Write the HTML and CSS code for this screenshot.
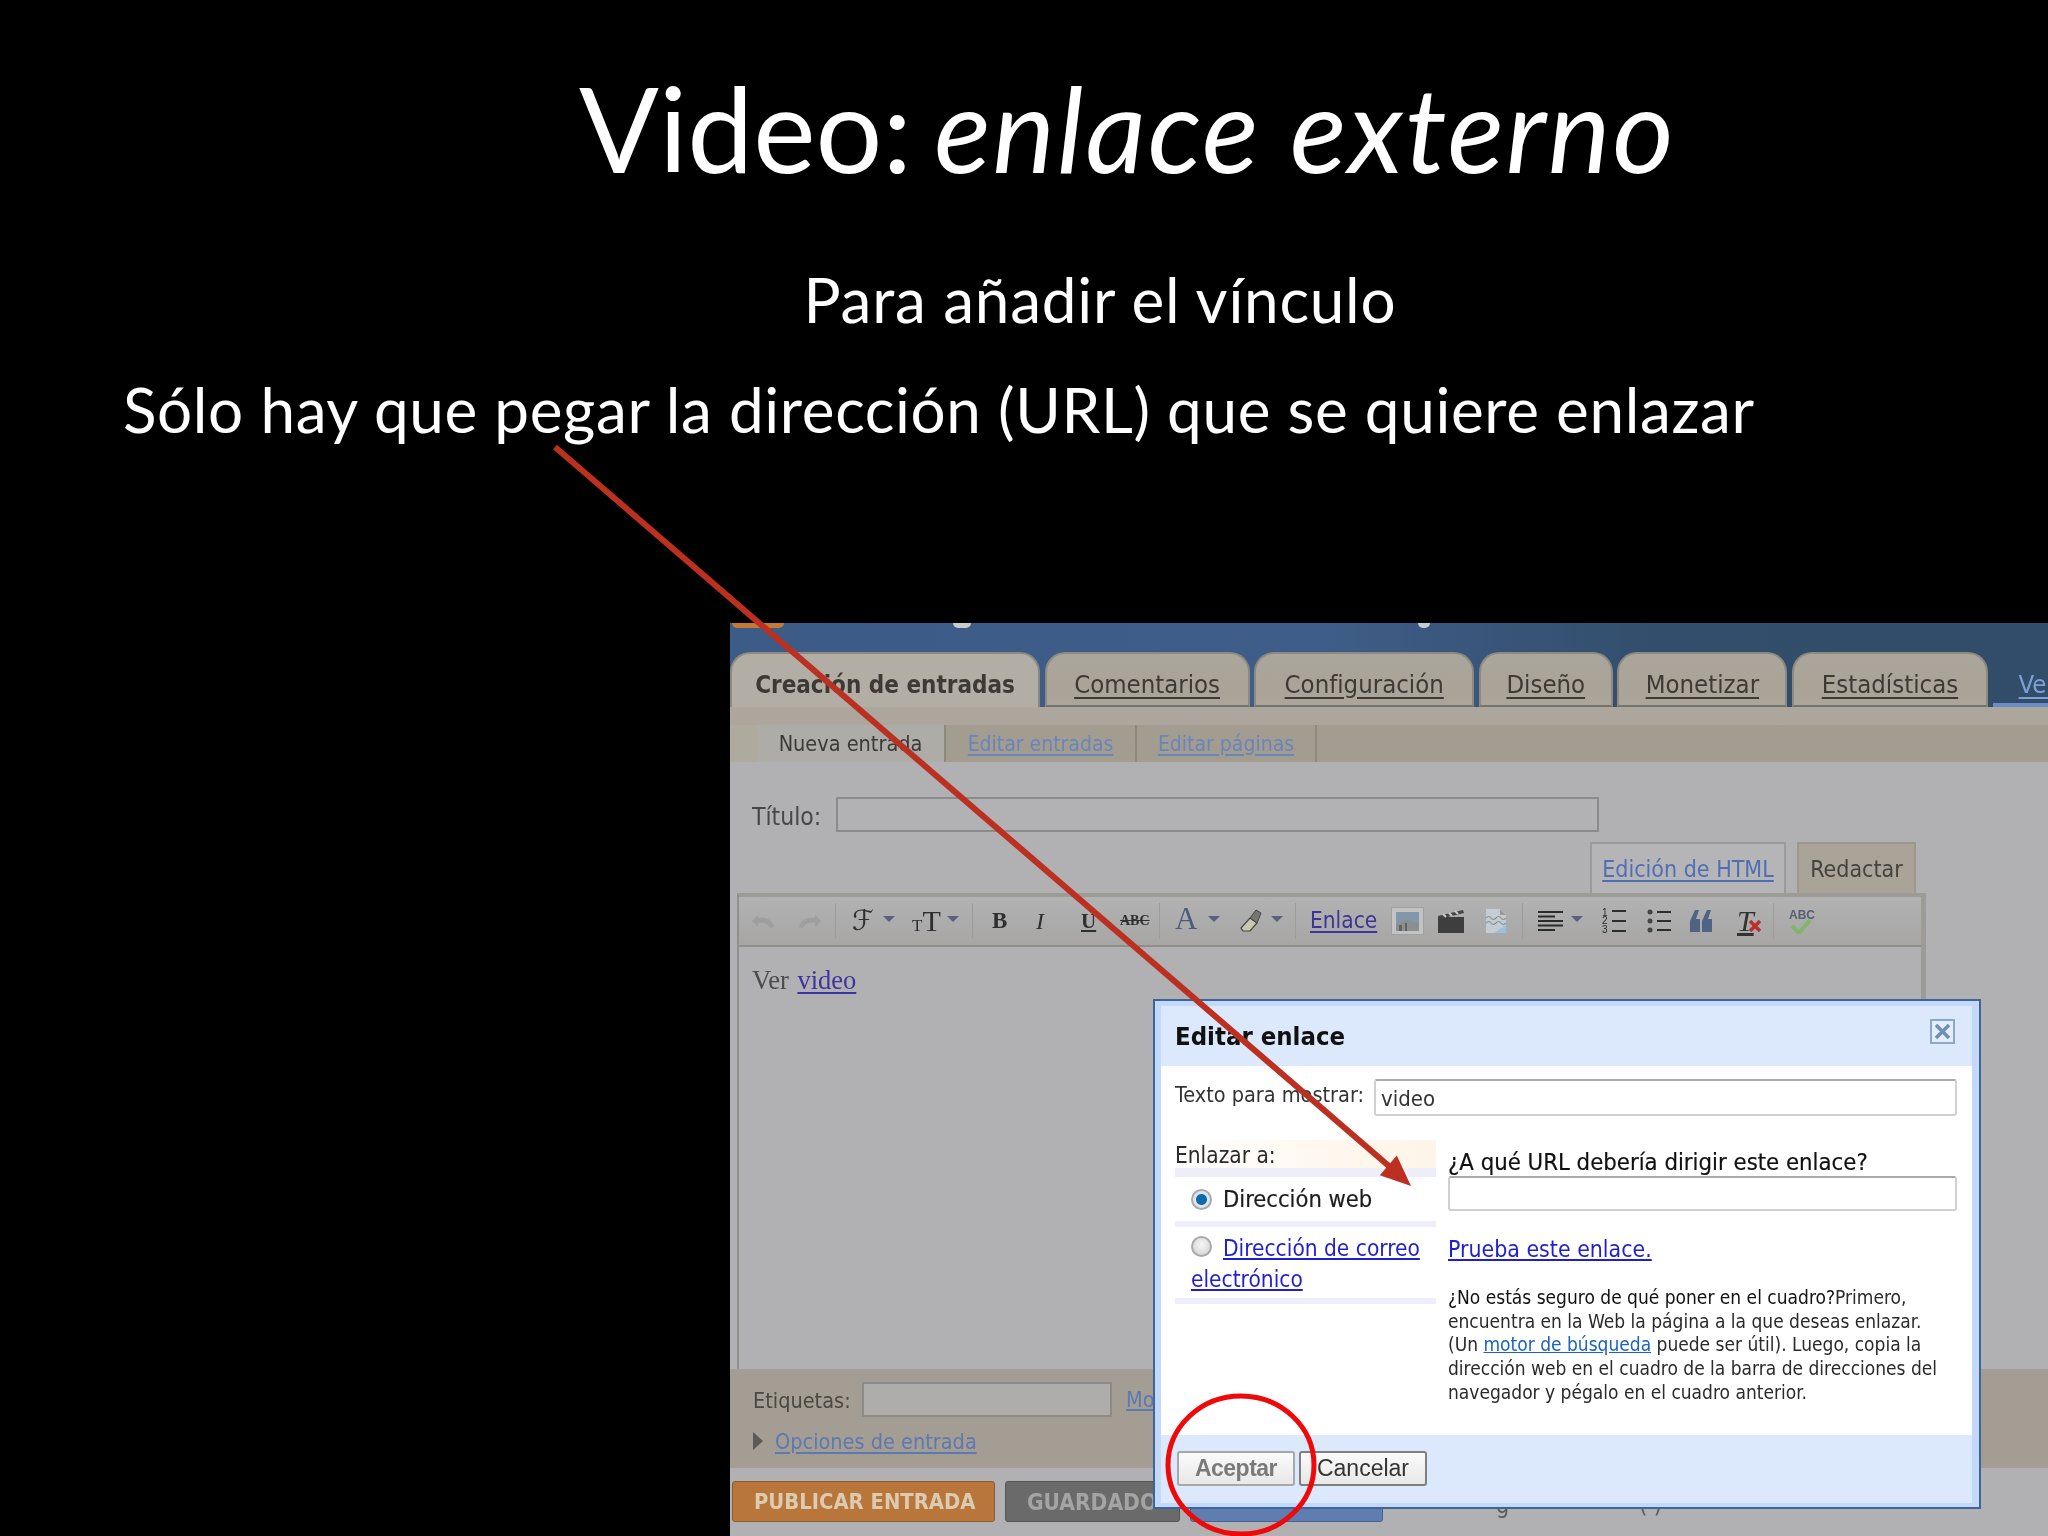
FILE: index.html
```html
<!DOCTYPE html>
<html lang="es">
<head>
<meta charset="utf-8">
<title>Video: enlace externo</title>
<link rel="stylesheet" href="styles.css">
</head>
<body>
<main class="slide">
  <h1 class="slide-title">Video: <em>enlace externo</em></h1>
  <p class="slide-sub">Para añadir el vínculo</p>
  <p class="slide-line">Sólo hay que pegar la dirección (URL) que se quiere enlazar</p>

  <section class="shot">
    <div class="topbar">
      <div class="strip"><i class="bit bit-orange"></i><i class="bit bit-white"></i><i class="bit bit-white2"></i></div>
      <nav class="tabs">
        <span class="tab tab-active">Creación de entradas</span>
        <a class="tab">Comentarios</a>
        <a class="tab">Configuración</a>
        <a class="tab">Diseño</a>
        <a class="tab">Monetizar</a>
        <a class="tab">Estadísticas</a>
        <a class="tab-view">Ver blog</a>
      </nav>
    </div>
    <div class="band"></div>
    <nav class="subnav">
      <i></i>
      <span class="sub sub-active">Nueva entrada</span>
      <a class="sub">Editar entradas</a>
      <a class="sub">Editar páginas</a>
    </nav>

    <div class="content">
      <div class="title-row">
        <label class="title-label">Título:</label>
        <div class="field title-field"></div>
      </div>
      <div class="mode-row">
        <a class="mode mode-html">Edición de HTML</a>
        <span class="mode mode-compose">Redactar</span>
      </div>
      <div class="editor">
        <div class="toolbar">
          <svg class="ic" width="23" height="14" viewBox="0 0 23 14"><path d="M6 13V1L0 7zM6 4c8-1 14 1 16 9l-4 1C16 9 12 8 6 9z" fill="#9f9e9e"/></svg>
          <svg class="ic" width="23" height="14" viewBox="0 0 23 14"><path d="M17 13V1l6 6zM17 4C9 3 3 5 1 13l4 1c2-5 6-6 12-5z" fill="#9f9e9e"/></svg>
          <i class="sep"></i>
          <span class="t-font">ℱ</span>
          <i class="caret"></i>
          <span class="t-size"><small>T</small>T</span>
          <i class="caret"></i>
          <i class="sep"></i>
          <b class="t-b">B</b>
          <i class="t-i">I</i>
          <span class="t-u">U</span>
          <span class="t-abc">ABC</span>
          <i class="sep"></i>
          <span class="t-a">A</span>
          <i class="caret"></i>
          <svg class="ic" width="22" height="24" viewBox="0 0 22 24"><path d="M1 19l9-10 7 5-7 8H3z" fill="#c9c8ac" stroke="#444" stroke-width="1.2"/><path d="M10 9l6-8 5 3-4 10z" fill="#77776f" stroke="#444"/></svg>
          <i class="caret"></i>
          <i class="sep"></i>
          <a class="t-link">Enlace</a>
          <span class="img-btn"><svg width="23" height="19" viewBox="0 0 23 19"><rect width="23" height="19" fill="#7f98ac"/><path d="M0 19v-7l5-2 5-3 6 3 7 1v8z" fill="#8b8f90"/><path d="M3 19v-6h3v6zM9 19v-8h2v8z" fill="#5e6466"/></svg></span>
          <svg class="ic" width="28" height="24" viewBox="0 0 28 24"><path d="M1 8h26v16H1z" fill="#3e3e3e"/><path d="M1 7l25-6 1 3L2 10z" fill="#444"/><path d="M6 5l3 3M12 4l3 3M18 2l3 3" stroke="#ccc" stroke-width="2"/></svg>
          <svg class="ic" width="22" height="26" viewBox="0 0 22 26"><path d="M1 1h14l6 6v18H1z" fill="#c3cdd3"/><path d="M15 1v6h6z" fill="#999"/><path d="M1 10q3-3 5 0t5 0 5 0 5 0M1 15q3-3 5 0t5 0 5 0 5 0" fill="none" stroke="#8e8e8c" stroke-width="1.2"/><path d="M9 25l12-8v8z" fill="#9cc0da"/></svg>
          <i class="sep"></i>
          <svg class="ic" width="25" height="20" viewBox="0 0 25 20"><path d="M0 1h25M0 5.500h17M0 10h25M0 14.500h25M0 19h17" stroke="#2b2b2b" stroke-width="2"/></svg>
          <i class="caret"></i>
          <svg class="ic" width="24" height="26" viewBox="0 0 24 26"><path d="M10 3h14M10 13h14M10 23h14" stroke="#2d2d2d" stroke-width="2"/><text class="ic-num" x="0" y="8">1</text><text class="ic-num" x="0" y="16">2</text><text class="ic-num" x="0" y="25">3</text></svg>
          <svg class="ic" width="24" height="24" viewBox="0 0 24 24"><path d="M10 3h14M10 12h14M10 21h14" stroke="#2d2d2d" stroke-width="2"/><circle cx="3" cy="3" r="2.500" fill="#444"/><circle cx="3" cy="12" r="2.500" fill="#444"/><circle cx="3" cy="21" r="2.500" fill="#444"/></svg>
          <svg class="ic" width="22" height="22" viewBox="0 0 22 22"><path d="M0 22V11L5 0h4L6 9h4v13zM12 22V11l5-11h4l-3 9h4v13z" fill="#4f6384"/></svg>
          <span class="t-clear">T<svg class="ic-x" width="12" height="12" viewBox="0 0 12 12"><path d="M1 1l10 10M11 1L1 11" stroke="#bb2f2f" stroke-width="3.500"/></svg></span>
          <i class="sep"></i>
          <span class="t-spell">ABC<svg class="ic-check" width="20" height="16" viewBox="0 0 20 16"><path d="M1 8l7 7L19 2" fill="none" stroke="#7fb56d" stroke-width="4"/></svg></span>
        </div>
        <div class="editor-body">Ver <a>video</a></div>
      </div>
      <div class="meta">
        <div class="labels-row">
          <span class="labels-label">Etiquetas:</span>
          <div class="field labels-field"></div>
          <a class="labels-more">Mostrar todo</a>
        </div>
        <div class="options-row"><i class="tri"></i><a>Opciones de entrada</a></div>
      </div>
      <div class="actions">
        <span class="btn btn-publish">PUBLICAR ENTRADA</span>
        <span class="btn btn-saved">GUARDADO</span>
        <span class="btn btn-preview"></span>
        <span class="under under-a">g</span>
        <span class="under under-b">( )</span>
      </div>
    </div>

    <div class="dialog">
      <header class="dlg-head">
        <strong>Editar enlace</strong>
        <span class="dlg-close"><svg width="17" height="17" viewBox="0 0 17 17"><path d="M2 2l13 13M15 2L2 15" stroke="#6f8fb5" stroke-width="3.500"/></svg></span>
      </header>
      <div class="dlg-body">
        <div class="dlg-row">
          <label>Texto para mostrar:</label>
          <div class="dlg-input dlg-input-text">video</div>
        </div>
        <div class="dlg-cols">
          <div class="dlg-left">
            <div class="dlg-to">Enlazar a:</div>
            <div class="opt opt-web"><span class="radio radio-on"></span><span>Dirección web</span></div>
            <div class="opt opt-mail"><a><span class="radio"></span><span class="opt-gap">Dirección de correo</span> electrónico</a></div>
          </div>
          <div class="dlg-right">
            <div class="dlg-q">¿A qué URL debería dirigir este enlace?</div>
            <div class="dlg-input dlg-input-url"></div>
            <a class="dlg-test">Prueba este enlace.</a>
            <p class="dlg-help"><b>¿No estás seguro de qué poner en el cuadro?</b>Primero, encuentra en la Web la página a la que deseas enlazar. (Un <a>motor de búsqueda</a> puede ser útil). Luego, copia la dirección web en el cuadro de la barra de direcciones del navegador y pégalo en el cuadro anterior.</p>
          </div>
        </div>
      </div>
      <footer class="dlg-foot">
        <span class="dlg-btn dlg-ok">Aceptar</span>
        <span class="dlg-btn dlg-cancel">Cancelar</span>
      </footer>
    </div>
  </section>

  <svg class="marks" width="2048" height="1536" viewBox="0 0 2048 1536">
    <path d="M555 447L1390 1167" stroke="#bb3020" stroke-width="6" fill="none"/>
    <polygon points="1411,1186 1379.800,1175.200 1396.800,1155.600" fill="#bb3020"/>
    <ellipse cx="1241" cy="1465" rx="73" ry="69" fill="none" stroke="#ee0a0a" stroke-width="5"/>
  </svg>
</main>
</body>
</html>
```
FILE: styles.css
```css
* { box-sizing: border-box; }
html, body { margin: 0; padding: 0; background: #000; }
a { color: inherit; text-decoration: underline; }
.slide {
  position: relative;
  width: 2048px;
  height: 1536px;
  overflow: hidden;
  background: #000;
  color: #fff;
  font-family: Lato, "Open Sans", sans-serif;
  display: flex;
  flex-direction: column;
}
.slide-title {
  margin: 0;
  height: 262px;
  padding-left: 579px;
  font-size: 118px;
  line-height: 256px;
  font-weight: 400;
  white-space: nowrap;
}
.slide-title em { font-style: italic; letter-spacing: 1.900px; margin-left: -8px; }
.slide-sub {
  margin: 0;
  height: 76px;
  text-align: center;
  padding-left: 152px;
  font-size: 62px;
  letter-spacing: 0.770px;
  line-height: 74px;
  white-space: nowrap;
}
.slide-line {
  margin: 34px 0 0;
  height: 76px;
  padding-left: 123px;
  font-size: 62px;
  letter-spacing: 0.630px;
  line-height: 74px;
  white-space: nowrap;
}

/* screenshot */
.shot {
  position: absolute;
  left: 730px;
  top: 623px;
  width: 1318px;
  height: 913px;
  overflow: hidden;
  color: #3b3a38;
  background: #b1b0b2;
  font-family: "DejaVu Sans", sans-serif;
  font-stretch: condensed;
  filter: blur(0.55px);
}
.topbar { height: 84px; background: linear-gradient(90deg, #3c5b86 0%, #3e5d88 45%, #334e6c 70%, #324d69 100%); }
.strip { height: 6px; position: relative; display: flex; }
.bit { display: block; height: 5px; border-radius: 0 0 5px 5px; }
.bit-orange { width: 52px; margin-left: 2px; background: #c47a35; }
.bit-white { width: 18px; margin-left: 169px; background: #c9cccf; }
.bit-white2 { width: 12px; margin-left: 447px; background: #c9cccf; }
.tabs {
  margin-top: 23px;
  height: 55px;
  display: grid;
  grid-template-columns: 310px 205px 220px 134px 170px 196px 1fr;
  column-gap: 4.6px;
  font-size: 25.500px;
}
.tab {
  display: flex;
  align-items: center;
  justify-content: center;
  background: linear-gradient(#aba69b, #a9a398 60%, #aba699);
  border: 2px solid #8e8a7f;
  border-bottom: 2px solid #74736e;
  border-radius: 20px 20px 0 0;
  color: #3d3a36;
  text-underline-offset: 4px;
  padding-top: 8px;
}
.tab-active {
  background: #b2aea6;
  font-weight: 700;
  font-size: 24px;
  border-bottom: 0;
  border-right-color: #8a877e;
  text-decoration: none;
}
.tab-view {
  align-self: stretch;
  border-bottom: 4px solid #6b8cc4;
  padding: 17px 0 0 26px;
  color: #7da0d6;
  white-space: nowrap;
  overflow: hidden;
  margin-right: -4.6px;
  text-underline-offset: 4px;
}
.band { height: 18px; background: #aca69c; }
.subnav {
  height: 37px;
  display: grid;
  grid-template-columns: 27px 189px 191px 180px;
  background: linear-gradient(#a29c91, #a39d90);
  font-size: 21px;
}
.subnav i { background: #aeaa9d; }
.sub {
  display: flex;
  align-items: center;
  justify-content: center;
  border-right: 2px solid #8c897e;
  color: #6a85bb;
  text-underline-offset: 3px;
}
.sub-active { background: #aeaca6; color: #3b3a38; font-size: 21.500px; }

.content { height: 775px; display: flow-root; background: #b1b0b2; }
.title-row { display: flex; margin: 35px 0 0 22px; height: 35px; align-items: center; font-size: 24.500px; color: #47474a; }
.title-label { width: 84px; padding-top: 3px; }
.field { border: 2px solid #8b8b8b; background: #b2b1b4; }
.title-field { width: 763px; height: 35px; }
.mode-row { display: flex; margin: 10px 0 0 860px; height: 51px; gap: 11px; font-size: 23px; }
.mode { display: flex; align-items: center; justify-content: center; border: 2px solid #9a9a98; border-bottom: 0; }
.mode-html { width: 196px; background: #b5b5b7; color: #506fb3; text-underline-offset: 3px; }
.mode-compose { width: 119px; background: #a9a398; color: #45433f; border-color: #9d988c; }

.editor {
  margin-left: 7px;
  width: 1189px;
  height: 476px;
  border-top: 4px solid #9c9b95;
  border-right: 5px solid #9c9b95;
  border-left: 2px solid #8f8f8d;
}
.toolbar {
  height: 50px;
  padding-left: 13px;
  display: grid;
  grid-template-columns: 46px 37px 17px 31px 29px 35px 25px 20px 44px 45px 39px 39px 16px 33px 32px 31px 24px 15px 81px 46px 48px 37px 16px 33px 31px 45px 43px 47px 36px 16px 30px;
  align-items: center;
  justify-items: start;
  background: linear-gradient(#b3b2b3, #a7a6a5);
  border-bottom: 2px solid #8f8e8b;
  font-family: "Liberation Serif", serif;
  font-stretch: normal;
  color: #2f2f2f;
}
.ic { display: block; }
.ic-num { font: 10px "Liberation Sans", sans-serif; fill: #2d2d2d; }
.sep { width: 1px; height: 36px; background: #9d9c9b; }
.caret {
  width: 0;
  height: 0;
  border-left: 6px solid transparent;
  border-right: 6px solid transparent;
  border-top: 6px solid #5c5f80;
  margin-bottom: 4px;
}
.t-font { font-size: 28px; line-height: 1; font-family: "DejaVu Sans", serif; font-stretch: normal; }
.t-size { font-size: 30px; line-height: 1; }
.t-size small { font-size: 17px; }
.t-b { font-size: 23px; font-weight: 700; }
.t-i { font-size: 24px; font-style: italic; font-family: "Liberation Serif", serif; }
.t-u { font-size: 21px; font-weight: 700; text-decoration: underline; }
.t-abc { font-size: 14px; font-weight: 700; text-decoration: line-through; }
.t-a { font-size: 31px; line-height: 1; color: #4c5a80; margin-bottom: 6px; }
.t-link { font: 22.500px "DejaVu Sans", sans-serif; font-stretch: condensed; color: #3c3498; margin-bottom: 2px; text-underline-offset: 3px; }
.img-btn { width: 33px; height: 28px; margin-left: 0; display: flex; align-items: center; justify-content: center; background: #c4c3c3; border: 1px solid #a0a0a0; }
.img-btn svg { display: block; }
.t-clear { position: relative; font-size: 30px; font-style: italic; font-weight: 400; line-height: 1; text-decoration: underline; color: #33332f; }
.ic-x { position: absolute; left: 12px; top: 14px; }
.t-spell { position: relative; display: block; width: 24px; height: 26px; font: 700 12px "Liberation Sans", sans-serif; color: #565e70; }
.ic-check { position: absolute; left: 2px; top: 10px; }
.editor-body { padding: 18px 0 0 13px; font: 26.500px "Liberation Serif", serif; color: #4b4b4d; }
.editor-body a { color: #3c349f; margin-left: 2px; text-underline-offset: 3px; }

.meta { height: 99px; background: #a39d93; padding: 13px 0 0 23px; font-size: 21.500px; }
.labels-row { display: flex; height: 35px; align-items: center; color: #4a4842; }
.labels-label { width: 109px; padding-top: 2px; }
.labels-field { width: 250px; height: 35px; border-color: #8b8b88; background: #aeadab; }
.labels-more { margin-left: 14px; color: #5d79b2; white-space: nowrap; }
.options-row { display: flex; align-items: center; margin-top: 11px; height: 26px; color: #5d79b2; }
.tri { width: 0; height: 0; border-top: 9px solid transparent; border-bottom: 9px solid transparent; border-left: 10px solid #5b5a55; margin-right: 12px; }
.options-row a { text-underline-offset: 3px; }
.actions { display: flex; margin: 13px 0 0 2px; height: 41px; position: relative; gap: 10px; }
.btn { display: flex; align-items: center; font-weight: 700; font-size: 21.800px; padding-left: 21px; border-radius: 3px; color: #cfc7ba; white-space: nowrap; overflow: hidden; }
.btn-publish { width: 263px; background: #b9763a; border: 1px solid #8e5a2c; color: #dccbb0; }
.btn-saved { width: 175px; background: #6a6a6b; border: 1px solid #555; color: #a4a4a4; font-size: 22.500px; }
.btn-preview { width: 193px; background: #5f7db0; border: 1px solid #46628f; }
.under { color: #5a5a5a; font-size: 23px; line-height: 26px; margin-top: 11px; white-space: pre; }
.under-a { margin-left: 103px; }
.under-b { margin-left: 120px; }

/* dialog */
.dialog {
  position: absolute;
  left: 423px;
  top: 376px;
  width: 828px;
  height: 510px;
  border: 2px solid #3f6597;
  background: #c3d9fb;
  padding: 5px 7px 4px 6px;
  display: flex;
  flex-direction: column;
  color: #1e1e1e;
}
.dlg-head {
  height: 60px;
  flex: none;
  background: #dce9fd;
  display: flex;
  justify-content: space-between;
  align-items: center;
  padding: 0 17px 0 14px;
  color: #111;
  font-size: 25.500px;
}
.dlg-close {
  width: 25px;
  height: 25px;
  margin-bottom: 9px;
  display: flex;
  align-items: center;
  justify-content: center;
  border: 2px solid #8ea6c7;
  background: #e3edfd;
}
.dlg-close svg { display: block; }
.dlg-body { height: 369px; flex: none; background: #fff; padding: 13px 15px 0 14px; font-size: 22.500px; }
.dlg-row { display: flex; align-items: center; justify-content: space-between; height: 37px; color: #333; }
.dlg-row label { margin-bottom: 6px; font-size: 21.500px; }
.dlg-input { border: 2px solid #d0d0d0; border-top-color: #aaa; border-radius: 3px; background: #fff; }
.dlg-input-text { width: 583px; height: 37px; padding: 5px 0 0 5px; font-size: 22px; }
.dlg-cols { display: grid; grid-template-columns: 261px 509px; column-gap: 12px; margin-top: 24px; }
.dlg-to { height: 28px; padding-top: 2px; background: linear-gradient(90deg, #fff, #fff6ec 70%, #fdf5ea); line-height: 26px; color: #2b2b2b; }
.opt { padding: 0 16px; background: #fff; border-top: 9px solid #eeeefa; }
.opt-web { height: 53px; display: flex; align-items: center; color: #1c1c1c; font-size: 23.500px; -webkit-text-stroke: 0.2px #1c1c1c; }
.opt-web .radio { margin-right: 11px; }
.opt-mail { height: 83px; border-top-width: 6px; border-bottom: 6px solid #eeeefa; color: #1f1fd0; line-height: 31px; padding-top: 6px; }
.opt-gap { margin-left: 11px; }
.radio {
  display: inline-block;
  width: 21px;
  height: 21px;
  border-radius: 50%;
  border: 2px solid #aaa;
  background: radial-gradient(circle at 50% 40%, #f6f6f6, #cfcfcf);
  vertical-align: -1px;
}
.radio-on { background: radial-gradient(circle, #0f6ca8 0 5px, #dfe6ee 6px); }
.dlg-right { display: flex; flex-direction: column; padding-top: 8px; }
.dlg-q { height: 28px; line-height: 28px; color: #111; font-size: 23.700px; white-space: nowrap; -webkit-text-stroke: 0.2px #111; }
.dlg-input-url { height: 35px; }
.dlg-test { margin-top: 24px; line-height: 28px; color: #1f1fd0; font-size: 22.900px; white-space: nowrap; }
.dlg-help { margin: 23px 0 0; width: 500px; font-size: 19px; line-height: 23.700px; color: #2a2a2a; }
.dlg-help b { font-weight: 400; color: #111; }
.dlg-help a { color: #1a62c4; }
.dlg-foot { flex: 1; background: #dce8fc; display: flex; gap: 4px; padding: 16px 0 0 16px; }
.dlg-btn {
  height: 35px;
  display: flex;
  align-items: center;
  justify-content: center;
  border: 2px solid #a8a8a8;
  border-radius: 3px;
  background: linear-gradient(#fafafa, #e8e8e8);
  font-family: "Liberation Sans", sans-serif;
  font-size: 23px;
}
.dlg-ok { width: 118px; font-weight: 700; color: #7a7a7a; letter-spacing: -0.5px; }
.dlg-cancel { width: 128px; color: #333; border-color: #7f7f7f; }

.marks { position: absolute; left: 0; top: 0; pointer-events: none; }
```
